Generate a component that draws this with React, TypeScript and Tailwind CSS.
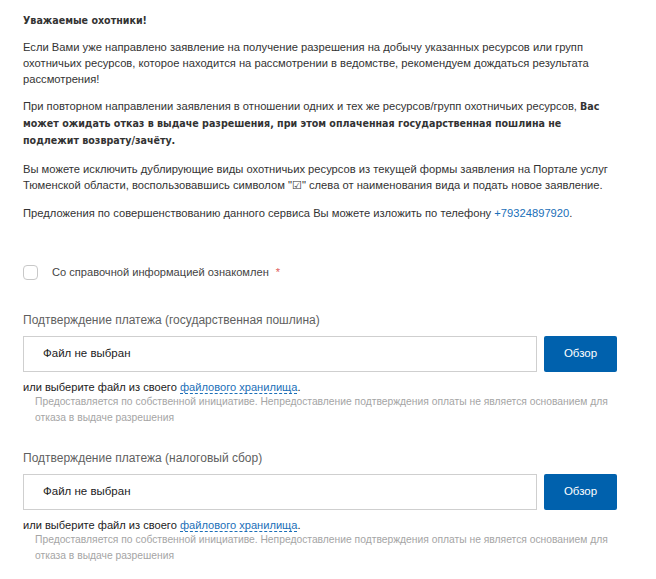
const sans = "font-['Liberation_Sans',Arial,sans-serif]";
const bold = "font-['DejaVu_Sans_Condensed','DejaVu_Sans',Verdana,sans-serif] font-bold";

function FileField({ label }: { label: string }) {
  return (
    <div className="flex flex-col">
      <div className="text-[12px] leading-[16px] text-[#5f5f5f]">{label}</div>
      <div className="mt-[8px] flex gap-[7px]">
        <div className="flex h-[36px] w-[514px] items-center border border-[#cfcfcf] pl-[19px] text-[11.5px] text-[#222]">
          Файл не выбран
        </div>
        <button className="h-[36px] w-[73px] rounded-[2px] bg-[#0061ad] text-[11.5px] text-white">Обзор</button>
      </div>
      <div className="mt-[9px] text-[11.1px] leading-[13px] text-[#222]">
        или выберите файл из своего{" "}
        <span className="border-b border-dashed border-[#1a6fb8] text-[#1a6fb8]">файлового хранилища</span>.
      </div>
      <div className="w-[600px] pl-[12px] text-[10.3px] leading-[16px] text-[#a5a5a5]">
        Предоставляется по собственной инициативе. Непредоставление подтверждения оплаты не является основанием для
        отказа в выдаче разрешения
      </div>
    </div>
  );
}

export default function App() {
  return (
    <div className={`min-h-screen bg-white px-[23px] pt-[12px] ${sans}`}>
      <div className="flex w-[612px] flex-col gap-[11px] text-[11.2px] leading-[16px] text-[#333]">
        <p className={`${bold} text-[10.6px]`}>Уважаемые охотники!</p>
        <p>
          Если Вами уже направлено заявление на получение разрешения на добычу указанных ресурсов или групп
          охотничьих ресурсов, которое находится на рассмотрении в ведомстве, рекомендуем дождаться результата
          рассмотрения!
        </p>
        <p className="w-[588px] leading-[17px]">
          При повторном направлении заявления в отношении одних и тех же ресурсов/групп охотничьих ресурсов,{" "}
          <span className={`${bold} text-[10.6px]`}>
            Вас может ожидать отказ в выдаче разрешения, при этом оплаченная государственная пошлина не подлежит
            возврату/зачёту.
          </span>
        </p>
        <p className="pt-[1px]">
          Вы можете исключить дублирующие виды охотничьих ресурсов из текущей формы заявления на Портале услуг
          Тюменской области, воспользовавшись символом "☑" слева от наименования вида и подать новое заявление.
        </p>
        <p className="pt-[1px]">
          Предложения по совершенствованию данного сервиса Вы можете изложить по телефону{" "}
          <span className="text-[#1a6fb8]">+79324897920</span>.
        </p>
      </div>

      <label className="mt-[43px] flex items-center gap-[14px]">
        <span className="h-[15px] w-[15px] rounded-[4px] border border-[#c8c8c8]" />
        <span className="text-[11.1px] text-[#444]">
          Со справочной информацией ознакомлен <span className="ml-[4px] text-[#e06060]">*</span>
        </span>
      </label>

      <div className="mt-[31px] flex flex-col gap-[24px]">
        <FileField label="Подтверждение платежа (государственная пошлина)" />
        <FileField label="Подтверждение платежа (налоговый сбор)" />
      </div>
    </div>
  );
}
